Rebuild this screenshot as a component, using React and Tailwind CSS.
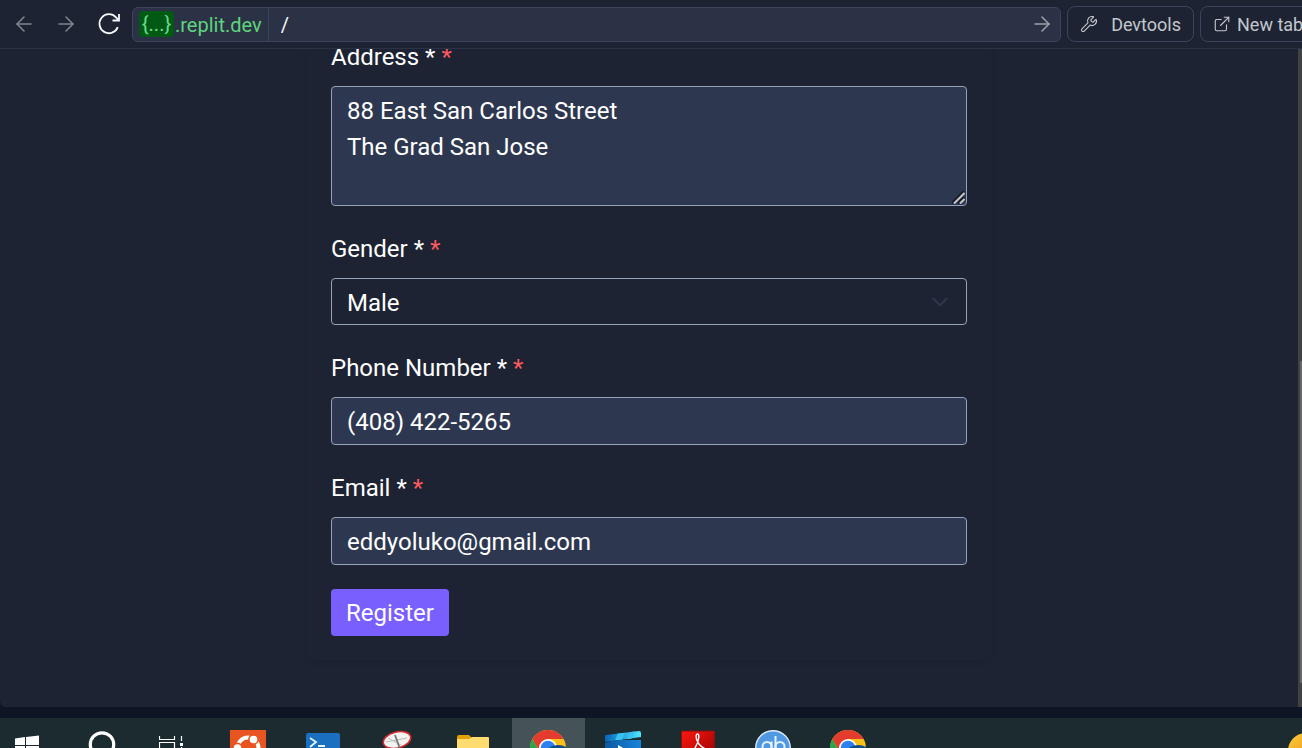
import { ArrowLeft, ArrowRight, ChevronDown, ExternalLink, Wrench } from "lucide-react";

function Field({ id, label, children }) {
  return (
    <div className="flex flex-col gap-2.5">
      <label htmlFor={id} className="text-2xl leading-[38px]">
        {label} * <span className="text-[#ff5a5f]">*</span>
      </label>
      {children}
    </div>
  );
}

const boxClass =
  "block w-full rounded border border-[#94a3b8] bg-[#2d3850] px-[15px] text-2xl leading-9 text-white outline-none";

function Chrome() {
  return (
    <svg width="36" height="36" viewBox="0 0 36 36">
      <circle cx="18" cy="18" r="18" fill="#fbc116" />
      <path d="M2.4 9A18 18 0 0 1 33.6 9H18l-7.8 13.5Z" fill="#e33b2e" />
      <path d="M2.4 9A18 18 0 0 0 18 36l8-13.5H10.2Z" fill="#2ea44f" />
      <circle cx="18" cy="18" r="9" fill="#fff" />
      <circle cx="18" cy="18" r="7.3" fill="#2f80f0" />
      <ellipse cx="28" cy="25" rx="13" ry="10" fill="#0f4c8a" />
    </svg>
  );
}

const apps = [
  {
    name: "Ubuntu",
    icon: (
      <svg width="36" height="36" viewBox="0 0 36 36">
        <path d="M0 0h36v36H0z" fill="#e95420" />
        <circle cx="18" cy="18" r="10.5" fill="none" stroke="#fff" strokeWidth="4" />
        <g fill="#fff" stroke="#e95420" strokeWidth="1.6">
          <circle cx="23.5" cy="9.5" r="4.6" />
          <circle cx="7.5" cy="18" r="4.6" />
          <circle cx="23.5" cy="27" r="4.6" />
        </g>
      </svg>
    ),
  },
  {
    name: "PowerShell",
    icon: (
      <svg width="36" height="36" viewBox="0 0 36 36">
        <rect x="1" y="3" width="34" height="30" rx="2" fill="#1a6fc0" />
        <path d="m5 8 6 4-6 5M13 16h7" fill="none" stroke="#e8f4ff" strokeWidth="1.8" />
      </svg>
    ),
  },
  {
    name: "Snipping tool",
    icon: (
      <svg width="36" height="36" viewBox="0 0 36 36">
        <ellipse cx="17" cy="10" rx="14" ry="8" fill="#f3f3f3" stroke="#d52b2b" strokeWidth="1.6" transform="rotate(-14 17 10)" />
        <path d="M6 12 27 8M8 8l13 7" stroke="#bbb" strokeWidth="1" />
        <path d="m15 5 5 14" stroke="#777" strokeWidth="1.8" />
      </svg>
    ),
  },
  {
    name: "File Explorer",
    icon: (
      <svg width="36" height="36" viewBox="0 0 36 36">
        <path d="M2 7q0-2 2-2h10l3 3v8H2z" fill="#e2a100" />
        <path d="M2 9h12l3-2h16q1 0 1 1v25H2z" fill="#ffdc70" />
      </svg>
    ),
  },
  { name: "Chrome", icon: <Chrome />, active: true },
  {
    name: "Movies",
    icon: (
      <svg width="38" height="36" viewBox="0 0 38 36">
        <defs>
          <linearGradient id="clap">
            <stop stopColor="#0864b8" />
            <stop offset="1" stopColor="#50e6ff" />
          </linearGradient>
          <linearGradient id="movie">
            <stop stopColor="#0c59a4" />
            <stop offset="1" stopColor="#1684d9" />
          </linearGradient>
        </defs>
        <path d="M1 6q0-1 1-1l33-4q2 0 2 2v4L1 12z" fill="url(#clap)" />
        <path d="m14 3.5 7-.8-3 6.8-7 .8zM27 2l4-.6-3 7-5 .8z" fill="#36c3f1" />
        <path d="M1 13 12 10h25v25H1z" fill="url(#movie)" />
        <path d="M14 15v14l12-7z" fill="#fff" />
      </svg>
    ),
  },
  {
    name: "Adobe Reader",
    icon: (
      <svg width="34" height="36" viewBox="0 0 34 36">
        <defs>
          <linearGradient id="pdf" x2="1" y2="1">
            <stop stopColor="#ff1710" />
            <stop offset="1" stopColor="#8c0000" />
          </linearGradient>
        </defs>
        <path d="M.5 1h33v34H.5z" fill="url(#pdf)" stroke="#811313" />
        <path d="M15.5 9q-1-5 1-5t1 5q-1 7-8 15 8-7 15-5-7-3-9-10Z" fill="none" stroke="#fff" strokeWidth="1.4" />
      </svg>
    ),
  },
  {
    name: "gb",
    icon: (
      <svg width="36" height="36" viewBox="0 0 36 36">
        <circle cx="18" cy="18" r="17.3" fill="#5198e2" stroke="#dcecff" strokeWidth="1.4" />
        <g fill="none" stroke="#e6f3ff" strokeWidth="2">
          <circle cx="12" cy="16.5" r="4.5" />
          <path d="M16.5 11.5v12q0 5-8 3M20.5 6v16" />
          <circle cx="25" cy="16.5" r="4.5" />
        </g>
      </svg>
    ),
  },
  { name: "Chrome profile", icon: <Chrome /> },
];

function Toolbar() {
  return (
    <header className="flex h-[49px] shrink-0 items-center border-b border-[#2b3245] text-lg">
      <button aria-label="Back" className="ml-3 text-[#80868f]">
        <ArrowLeft size={24} strokeWidth={1.5} />
      </button>
      <button aria-label="Forward" className="ml-[18px] text-[#80868f]">
        <ArrowRight size={24} strokeWidth={1.5} />
      </button>
      <button aria-label="Reload" className="ml-[18px] text-[#f5f9fc]">
        <svg width="26" height="26" viewBox="0 0 26 26" fill="none" stroke="currentColor" strokeWidth="1.8">
          <path d="M21.8 16.2A9.5 9.5 0 1 1 20 6.3l2.6 2.8" />
          <path d="M23 3v6.5h-6.5" />
        </svg>
      </button>
      <div className="ml-2.5 flex h-[35px] min-w-0 flex-1 items-center rounded-md border border-[#3c445c] bg-[#2b3245] pl-1.5">
        <button className="h-[26px] w-[35px] shrink-0 rounded bg-[#005a14] text-xl leading-[26px] text-[#6cd98c]">
          {"{...}"}
        </button>
        <span className="pl-px pr-1.5 pt-0.5 text-xl leading-7 text-[#5fd47c]">.replit.dev</span>
        <input
          aria-label="Path"
          defaultValue="/"
          className="h-full min-w-0 flex-1 border-l border-[#3c445c] bg-transparent px-3 pt-0.5 text-xl text-[#f5f9fc] outline-none"
        />
        <button aria-label="Go" className="mr-1.5 text-[#9da2a6]">
          <ArrowRight size={24} strokeWidth={1.5} />
        </button>
      </div>
      <button className="ml-1.5 flex h-9 w-[127px] shrink-0 items-center justify-between rounded-lg border border-[#3c445c] px-3 text-[#c2c8cc]">
        <Wrench size={18} strokeWidth={1.5} />
        <span className="pt-0.5">Devtools</span>
      </button>
      <div className="ml-1.5 w-[102px] shrink-0 overflow-hidden">
        <button className="flex h-9 w-[120px] items-center gap-1.5 whitespace-nowrap rounded-lg border border-[#3c445c] px-3 text-[#c2c8cc]">
          <ExternalLink size={18} strokeWidth={1.5} className="shrink-0" />
          <span className="pt-0.5">New tab</span>
        </button>
      </div>
    </header>
  );
}

function Taskbar() {
  return (
    <nav aria-label="Taskbar" className="flex h-[30px] shrink-0 items-start overflow-hidden bg-[#1b2b2f]">
      <div className="flex w-[212px] shrink-0 pt-3">
        <button aria-label="Start" className="ml-[15px]">
          <svg width="24" height="36" viewBox="0 0 24 36" fill="#fff">
            <path d="M0 8.5 10 7v8H0zM11 7l13-1.5V15H11zM0 16h10v8L0 22.5zM11 16h13v10l-13-1.5z" />
          </svg>
        </button>
        <button aria-label="Search" className="ml-12">
          <svg width="30" height="36" viewBox="0 0 30 36">
            <circle cx="15" cy="14.5" r="11.7" fill="none" stroke="#fff" strokeWidth="3.2" />
          </svg>
        </button>
        <button aria-label="Task view" className="ml-[42px]">
          <svg width="26" height="36" viewBox="0 0 26 36" fill="none" stroke="#fff" strokeWidth="1.2">
            <path d="M.5 6v3.5h15V6M.5 24V12.5h15V24M22.5 6v5M22.5 17v9" />
            <path d="M21 13h3v3h-3z" fill="#fff" stroke="none" />
          </svg>
        </button>
      </div>
      <div className="flex flex-1 gap-0.5">
        {apps.map((app) => (
          <button
            key={app.name}
            aria-label={app.name}
            className={
              app.active
                ? "flex h-12 w-[73px] justify-center bg-[#455257] pr-px pt-3"
                : "flex h-12 w-[73px] justify-center pr-px pt-3"
            }
          >
            {app.icon}
          </button>
        ))}
      </div>
      <button aria-label="Weather" className="w-3.5 shrink-0 overflow-hidden pt-[15px]">
        <svg width="36" height="36" viewBox="0 0 36 36">
          <defs>
            <linearGradient id="sun" x2="1" y2="1">
              <stop stopColor="#f9cf38" />
              <stop offset="1" stopColor="#ee7512" />
            </linearGradient>
          </defs>
          <circle cx="18" cy="18" r="18" fill="url(#sun)" />
        </svg>
      </button>
    </nav>
  );
}

export default function App() {
  return (
    <div className="flex h-screen flex-col overflow-hidden bg-[#0e1525] font-['Roboto',sans-serif] text-white">
      <div className="flex min-h-0 flex-1 flex-col rounded-bl-md bg-[#1d2333]">
        <Toolbar />
        <div className="flex min-h-0 flex-1">
          <main className="flex min-w-0 flex-1 flex-col items-center justify-end overflow-hidden pb-[47px]">
            <form
              onSubmit={(e) => e.preventDefault()}
              className="flex w-full max-w-[684px] flex-col gap-6 rounded-lg px-6 pb-6 shadow-[0_2px_6px_rgba(0,0,0,0.07)]"
            >
              <Field id="address" label="Address">
                <div className="relative">
                  <textarea
                    id="address"
                    defaultValue={"88 East San Carlos Street\nThe Grad San Jose"}
                    className={boxClass + " h-[120px] resize-none overflow-hidden py-1.5"}
                  />
                  <svg
                    className="pointer-events-none absolute bottom-0.5 right-0.5"
                    width="13"
                    height="13"
                    viewBox="0 0 13 13"
                    fill="none"
                  >
                    <path d="M0 12 12 0M6 12l6-6" stroke="#151a25" strokeWidth="2" />
                    <path d="M2 12.5 12.5 2M8 12.5l4.5-4.5" stroke="#c7c7c7" strokeWidth="2" />
                  </svg>
                </div>
              </Field>
              <Field id="gender" label="Gender">
                <div className="relative">
                  <select
                    id="gender"
                    defaultValue="Male"
                    className="block h-[47px] w-full appearance-none rounded border border-[#94a3b8] bg-[#1d2333] px-[15px] pt-0.5 text-2xl leading-9 text-white outline-none"
                  >
                    <option>Male</option>
                    <option>Female</option>
                  </select>
                  <ChevronDown
                    size={26}
                    strokeWidth={2}
                    className="pointer-events-none absolute right-3.5 top-[11px] text-[#2f364b]"
                  />
                </div>
              </Field>
              <Field id="phone" label="Phone Number">
                <input id="phone" type="tel" defaultValue="(408) 422-5265" className={boxClass + " h-12 pt-0.5"} />
              </Field>
              <Field id="email" label="Email">
                <input id="email" type="email" defaultValue="eddyoluko@gmail.com" className={boxClass + " h-12 pt-0.5"} />
              </Field>
              <button
                type="submit"
                className="h-[47px] self-start rounded bg-[#7a5fff] px-[15px] text-2xl leading-9 text-white"
              >
                Register
              </button>
            </form>
          </main>
          <div className="flex w-1 shrink-0 flex-col items-end bg-[#424242]">
            <div className="mt-[312px] h-[322px] w-0.5 bg-[#686868]" />
          </div>
        </div>
      </div>
      <div className="h-[11px] shrink-0" />
      <Taskbar />
    </div>
  );
}
